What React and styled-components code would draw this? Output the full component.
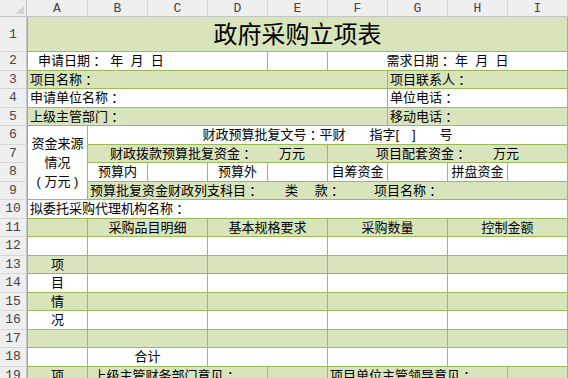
import React from "react";
import styled, { createGlobalStyle } from "styled-components";

const GlobalStyle = createGlobalStyle`
  html, body {
    margin: 0;
    padding: 0;
    background: #fff;
    overflow: hidden;
  }
`;

const Sheet = styled.div`
  display: grid;
  grid-template-columns: 27px 61px repeat(8, 60px);
  grid-template-rows: 17px 35px repeat(18, 18.5px);
  width: 568px;
  height: 378px;
  overflow: hidden;
  font-family: "Liberation Sans", "Noto Sans CJK SC", sans-serif;
  font-size: 13px;
  color: #000;
  text-spacing-trim: space-all;
`;

const Corner = styled.div`
  grid-column: 1;
  grid-row: 1;
  box-sizing: border-box;
  background: #efefef;
  border-right: 1px solid #c4c4c4;
  border-bottom: 1px solid #c4c4c4;
  display: flex;
  align-items: flex-end;
  justify-content: flex-end;
  padding: 0 2px 2px 0;
`;

const ColHead = styled.div`
  grid-column: ${(p) => p.$col};
  grid-row: 1;
  box-sizing: border-box;
  background: #efefef;
  border-right: 1px solid #d6d6d6;
  border-bottom: 1px solid #c4c4c4;
  display: flex;
  align-items: center;
  justify-content: center;
  font-family: "Liberation Mono", monospace;
  font-size: 13px;
  color: #444;
`;

const RowNum = styled.div`
  grid-column: 1;
  grid-row: ${(p) => p.$row};
  box-sizing: border-box;
  background: #efefef;
  border-right: 1px solid #c4c4c4;
  border-bottom: 1px solid #d6d6d6;
  display: flex;
  align-items: center;
  justify-content: center;
  font-family: "Liberation Mono", monospace;
  font-size: 13px;
  color: #444;
`;

const Cell = styled.div`
  grid-column: ${(p) => p.$col} / span ${(p) => p.$span};
  grid-row: ${(p) => p.$row} / span ${(p) => p.$rows};
  box-sizing: border-box;
  min-width: 0;
  overflow: hidden;
  background: ${(p) => (p.$fill ? "#d8e4bc" : "#ffffff")};
  border-right: 1px solid #9bbb59;
  border-bottom: 1px solid #9bbb59;
  border-left: ${(p) => (p.$col === 2 ? "1px solid #9bbb59" : "none")};
  display: flex;
  align-items: center;
  justify-content: ${(p) => (p.$left ? "flex-start" : "center")};
  padding-left: ${(p) => (p.$left ? p.$indent : 0)}px;
  white-space: pre;
  text-align: center;
  line-height: 19px;
  font-size: ${(p) => (p.$big ? 24 : 13)}px;
`;

// full-width colon drawn centred in its box, as the sheet's font does
const Colon = styled.span`
  font-family: "Noto Sans CJK TC", "Noto Sans CJK SC", sans-serif;
`;

const withColons = (text) =>
  text.split("：").map((part, i) => (
    <React.Fragment key={i}>
      {i > 0 && <Colon>：</Colon>}
      {part}
    </React.Fragment>
  ));

const letters = ["A", "B", "C", "D", "E", "F", "G", "H", "I"];
const col = (l) => letters.indexOf(l) + 2;

// one entry per sheet row: [start column, span, text, options]
const rows = [
  [["A", 9, "政府采购立项表", { big: true }]],
  [
    ["A", 4, "申请日期：  年  月  日", { left: true, indent: 10 }],
    ["E", 1, ""],
    ["F", 4, "需求日期： 年  月  日"],
  ],
  [["A", 6, "项目名称：", { left: true }], ["G", 3, "项目联系人：", { left: true }]],
  [["A", 6, "申请单位名称：", { left: true }], ["G", 3, "单位电话：", { left: true }]],
  [["A", 6, "上级主管部门：", { left: true }], ["G", 3, "移动电话：", { left: true }]],
  [
    ["A", 1, "source", { rows: 4, fill: false }],
    ["B", 8, "财政预算批复文号：平财　   指字[　]　   号"],
  ],
  [
    ["B", 4, "财政拨款预算批复资金：　　万元"],
    ["F", 4, "项目配套资金：　　万元"],
  ],
  [
    ["B", 1, "预算内"],
    ["C", 1, ""],
    ["D", 1, "预算外"],
    ["E", 1, ""],
    ["F", 1, "自筹资金"],
    ["G", 1, ""],
    ["H", 1, "拼盘资金"],
    ["I", 1, ""],
  ],
  [["B", 8, "预算批复资金财政列支科目：　　类　 款：　　  项目名称：", { left: true }]],
  [["A", 9, "拟委托采购代理机构名称：", { left: true }]],
  [
    ["A", 1, ""],
    ["B", 2, "采购品目明细"],
    ["D", 2, "基本规格要求"],
    ["F", 2, "采购数量"],
    ["H", 2, "控制金额"],
  ],
];

["", "项", "目", "情", "况", ""].forEach((ch) => {
  rows.push([["A", 1, ch], ["B", 2, ""], ["D", 2, ""], ["F", 2, ""], ["H", 2, ""]]);
});

rows.push([["A", 1, ""], ["B", 2, "合计"], ["D", 2, ""], ["F", 2, ""], ["H", 2, ""]]);
rows.push([
  ["A", 1, "项"],
  ["B", 3, " 上级主管财务部门意见：", { left: true }],
  ["E", 1, ""],
  ["F", 3, "项目单位主管领导意见：", { left: true }],
  ["I", 1, ""],
]);

const App = () => {
  return (
    <>
      <GlobalStyle />
      <Sheet>
        <Corner>
          <svg width="9" height="8" viewBox="0 0 9 8">
            <polygon points="9,0 9,8 0,8" fill="#d2d2d2" />
          </svg>
        </Corner>
        {letters.map((l) => (
          <ColHead key={l} $col={col(l)}>
            {l}
          </ColHead>
        ))}
        {rows.map((cells, i) => {
          const n = i + 1;
          const gridRow = n + 1;
          return (
            <React.Fragment key={n}>
              <RowNum $row={gridRow}>{n}</RowNum>
              {cells.map(([c, span, text, opt = {}]) => (
                <Cell
                  key={c}
                  $col={col(c)}
                  $span={span}
                  $row={gridRow}
                  $rows={opt.rows || 1}
                  $fill={opt.fill !== undefined ? opt.fill : n % 2 === 1}
                  $left={opt.left}
                  $indent={opt.indent || 2}
                  $big={opt.big}
                >
                  {text === "source" ? (
                    <span>
                      资金来源
                      <br />
                      情况
                      <br />
                      ( 万元 )
                    </span>
                  ) : (
                    withColons(text)
                  )}
                </Cell>
              ))}
            </React.Fragment>
          );
        })}
      </Sheet>
    </>
  );
};

export default App;
